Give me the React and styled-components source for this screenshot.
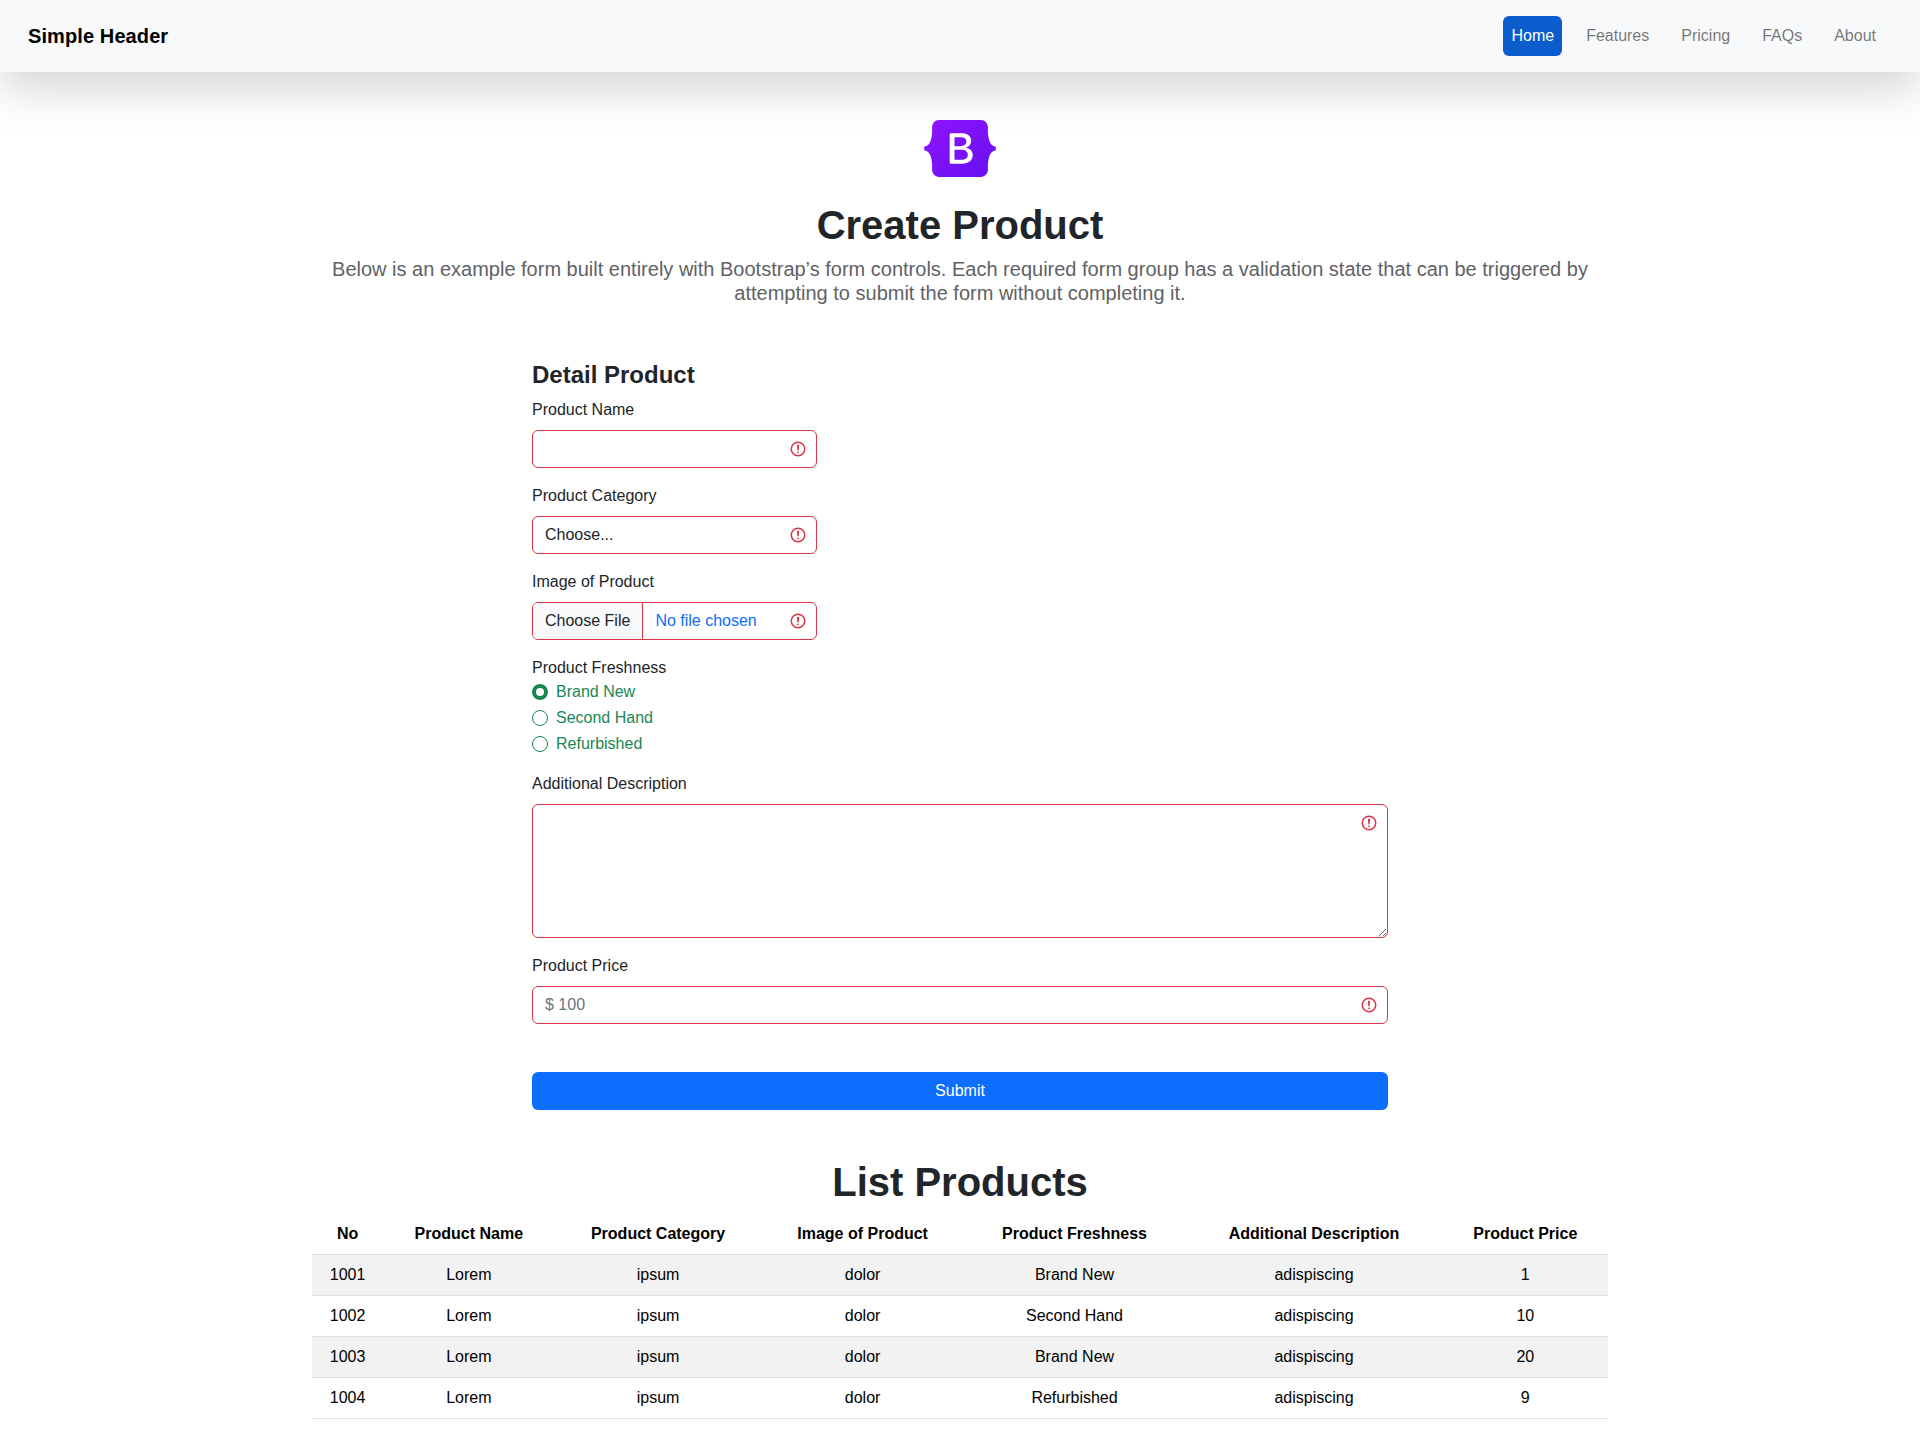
import React from "react";
import styled, { createGlobalStyle } from "styled-components";

const invalidIcon = `url("data:image/svg+xml,%3csvg xmlns='http://www.w3.org/2000/svg' viewBox='0 0 12 12' width='12' height='12' fill='none' stroke='%23dc3545'%3e%3ccircle cx='6' cy='6' r='4.5'/%3e%3cpath stroke-linejoin='round' d='M5.8 3.6h.4L6 6.5z'/%3e%3ccircle cx='6' cy='8.2' r='.6' fill='%23dc3545' stroke='none'/%3e%3c/svg%3e")`;

const GlobalStyle = createGlobalStyle`
  * {
    box-sizing: border-box;
  }
  body {
    margin: 0;
    background: #fff;
    color: #212529;
    font-family: "Liberation Sans", Arial, sans-serif;
    font-size: 16px;
    line-height: 1.5;
  }
`;

const Header = styled.header`
  display: flex;
  justify-content: space-between;
  align-items: center;
  height: 72px;
  padding: 0 36px 0 28px;
  background: #f8f9fa;
  box-shadow: 0 16px 48px rgba(0, 0, 0, 0.175);
`;

const Brand = styled.a`
  color: #000;
  font-size: 20px;
  font-weight: 700;
  letter-spacing: 0.1px;
`;

const Nav = styled.nav`
  display: flex;
  gap: 16px;
`;

const NavLink = styled.a`
  height: 40px;
  padding: 8px;
  border-radius: 6px;
  color: ${(props) => (props.$active ? "#fff" : "rgba(0, 0, 0, 0.55)")};
  background: ${(props) => (props.$active ? "#0b5ccc" : "transparent")};
`;

const Container = styled.main`
  width: 1296px;
  margin: 0 auto;
  padding-bottom: 32px;
`;

const Intro = styled.section`
  display: flex;
  flex-direction: column;
  align-items: center;
  padding: 48px 0;
  text-align: center;
`;

const Logo = styled.svg`
  display: block;
  width: 72px;
  height: 57px;
  margin-bottom: 24px;
`;

const Title = styled.h1`
  margin: 0 0 8px;
  font-size: 40px;
  font-weight: 700;
  line-height: 1.2;
`;

const Lead = styled.p`
  margin: 0;
  color: #5f6266;
  font-size: 20px;
  line-height: 24px;
`;

const Form = styled.form`
  width: 856px;
  margin: 8px auto 0;
`;

const SectionTitle = styled.h4`
  margin: 0 0 8px;
  font-size: 24px;
  font-weight: 700;
  line-height: 1.2;
`;

const Field = styled.div`
  width: ${(props) => (props.$short ? "285.33px" : "100%")};
  margin-bottom: 16px;
`;

const Label = styled.label`
  display: block;
  margin-bottom: 8px;
`;

const GroupLabel = styled.div`
  height: 24px;
`;

const Input = styled.input`
  display: block;
  width: 100%;
  height: 38px;
  padding: 6px 36px 6px 12px;
  border: 1px solid #dc3545;
  border-radius: 6px;
  outline: none;
  color: #212529;
  font-family: inherit;
  font-size: 16px;
  line-height: 24px;
  background: #fff ${invalidIcon} no-repeat right 9px center / 18px 18px;

  &::placeholder {
    color: #6c757d;
  }
`;

const Select = styled(Input).attrs({ as: "select" })`
  appearance: none;
`;

const FileInput = styled(Input)`
  overflow: hidden;
  color: #0d6efd;

  &::file-selector-button {
    height: 36px;
    margin: -6px 12px -6px -12px;
    padding: 6px 12px;
    border: 0;
    border-right: 1px solid #dc3545;
    border-radius: 0;
    color: #212529;
    font-family: inherit;
    font-size: 16px;
    background: #f8f9fa;
  }
`;

const TextArea = styled.textarea`
  display: block;
  width: 100%;
  height: 134px;
  padding: 6px 36px 6px 12px;
  border: 1px solid #dc3545;
  border-radius: 6px;
  outline: none;
  font-family: inherit;
  font-size: 16px;
  resize: vertical;
  background: #fff ${invalidIcon} no-repeat top 9px right 9px / 18px 18px;
`;

const RadioRow = styled.label`
  display: flex;
  align-items: center;
  gap: 8px;
  height: 24px;
  margin-bottom: 2px;
  color: #198754;

  &:last-child {
    margin-bottom: 0;
  }
`;

const Radio = styled.input`
  appearance: none;
  flex: none;
  width: 16px;
  height: 16px;
  margin: 1px 0 0;
  border: 1px solid #198754;
  border-radius: 50%;
  background: #fff;

  &:checked {
    border: 4px solid #198754;
  }
`;

const SubmitButton = styled.button`
  display: block;
  width: 100%;
  height: 38px;
  margin-top: 48px;
  border: 0;
  border-radius: 6px;
  color: #fff;
  font-family: inherit;
  font-size: 16px;
  background: #0d6efd;
`;

const ListTitle = styled.h1`
  margin: 48px 0 8px;
  font-size: 40px;
  font-weight: 700;
  line-height: 1.2;
  text-align: center;
`;

const Table = styled.table`
  width: 100%;
  border-collapse: collapse;
  color: #000;
  text-align: center;
`;

const HeadCell = styled.th`
  padding: 8px;
  border-bottom: 1px solid #dee2e6;
  font-weight: 700;
`;

const Cell = styled.td`
  padding: 8px;
  border-bottom: 1px solid #dee2e6;
`;

const Row = styled.tr`
  background: ${(props) => (props.$striped ? "#f2f2f2" : "#fff")};
`;

const columns = [
  "No",
  "Product Name",
  "Product Category",
  "Image of Product",
  "Product Freshness",
  "Additional Description",
  "Product Price",
];

const products = [
  [1001, "Lorem", "ipsum", "dolor", "Brand New", "adispiscing", 1],
  [1002, "Lorem", "ipsum", "dolor", "Second Hand", "adispiscing", 10],
  [1003, "Lorem", "ipsum", "dolor", "Brand New", "adispiscing", 20],
  [1004, "Lorem", "ipsum", "dolor", "Refurbished", "adispiscing", 9],
];

const navItems = ["Home", "Features", "Pricing", "FAQs", "About"];
const freshness = ["Brand New", "Second Hand", "Refurbished"];

const App = () => {
  return (
    <>
      <GlobalStyle />
      <Header>
        <Brand>Simple Header</Brand>
        <Nav>
          {navItems.map((item, i) => (
            <NavLink key={item} $active={i === 0}>
              {item}
            </NavLink>
          ))}
        </Nav>
      </Header>
      <Container>
        <Intro>
          <Logo viewBox="0 0 118 94" role="img" aria-label="Bootstrap">
            <defs>
              <linearGradient id="bsLogo" x1="0" y1="0" x2="1" y2="1">
                <stop offset="0" stopColor="#9013fe" />
                <stop offset="1" stopColor="#6610f2" />
              </linearGradient>
            </defs>
            <path
              fillRule="evenodd"
              clipRule="evenodd"
              fill="url(#bsLogo)"
              d="M24.509 0c-6.733 0-11.715 5.893-11.492 12.284.214 6.14-.064 14.092-2.066 20.577C8.943 39.365 5.547 43.485 0 44.014v5.972c5.547.529 8.943 4.649 10.951 11.153 2.002 6.485 2.28 14.437 2.066 20.577C12.794 88.106 17.776 94 24.51 94H93.5c6.733 0 11.714-5.893 11.491-12.284-.214-6.14.064-14.092 2.066-20.577 2.009-6.504 5.396-10.624 10.943-11.153v-5.972c-5.547-.529-8.934-4.649-10.943-11.153-2.002-6.484-2.28-14.437-2.066-20.577C105.214 5.894 100.233 0 93.5 0H24.508zM80 57.863C80 66.663 73.436 72 62.543 72H44a2 2 0 01-2-2V24a2 2 0 012-2h18.437c9.083 0 15.044 4.92 15.044 12.474 0 5.302-4.01 10.049-9.119 10.88v.277C75.317 46.394 80 51.21 80 57.863zM60.521 28.34H49.948v14.934h8.905c6.884 0 10.68-2.772 10.68-7.727 0-4.643-3.264-7.207-8.012-7.207zM49.948 49.2v16.458H60.91c7.167 0 10.964-2.876 10.964-8.281 0-5.406-3.903-8.178-11.425-8.178H49.948z"
            />
          </Logo>
          <Title>Create Product</Title>
          <Lead>
            Below is an example form built entirely with Bootstrap’s form
            controls. Each required form group has a validation state that can
            be triggered by attempting to submit the form without completing
            it.
          </Lead>
        </Intro>

        <Form onSubmit={(e) => e.preventDefault()}>
          <SectionTitle>Detail Product</SectionTitle>
          <Field $short>
            <Label htmlFor="name">Product Name</Label>
            <Input id="name" type="text" />
          </Field>
          <Field $short>
            <Label htmlFor="category">Product Category</Label>
            <Select id="category" defaultValue="">
              <option value="">Choose...</option>
              <option>Electronics</option>
            </Select>
          </Field>
          <Field $short>
            <Label htmlFor="image">Image of Product</Label>
            <FileInput id="image" type="file" />
          </Field>
          <Field>
            <GroupLabel>Product Freshness</GroupLabel>
            {freshness.map((item, i) => (
              <RadioRow key={item}>
                <Radio type="radio" name="freshness" defaultChecked={i === 0} />
                {item}
              </RadioRow>
            ))}
          </Field>
          <Field>
            <Label htmlFor="description">Additional Description</Label>
            <TextArea id="description" />
          </Field>
          <Field>
            <Label htmlFor="price">Product Price</Label>
            <Input id="price" type="text" placeholder="$ 100" />
          </Field>
          <SubmitButton type="submit">Submit</SubmitButton>
        </Form>

        <ListTitle>List Products</ListTitle>
        <Table>
          <thead>
            <tr>
              {columns.map((col) => (
                <HeadCell key={col}>{col}</HeadCell>
              ))}
            </tr>
          </thead>
          <tbody>
            {products.map((row, i) => (
              <Row key={row[0]} $striped={i % 2 === 0}>
                {row.map((value, j) => (
                  <Cell key={j}>{value}</Cell>
                ))}
              </Row>
            ))}
          </tbody>
        </Table>
      </Container>
    </>
  );
};

export default App;
